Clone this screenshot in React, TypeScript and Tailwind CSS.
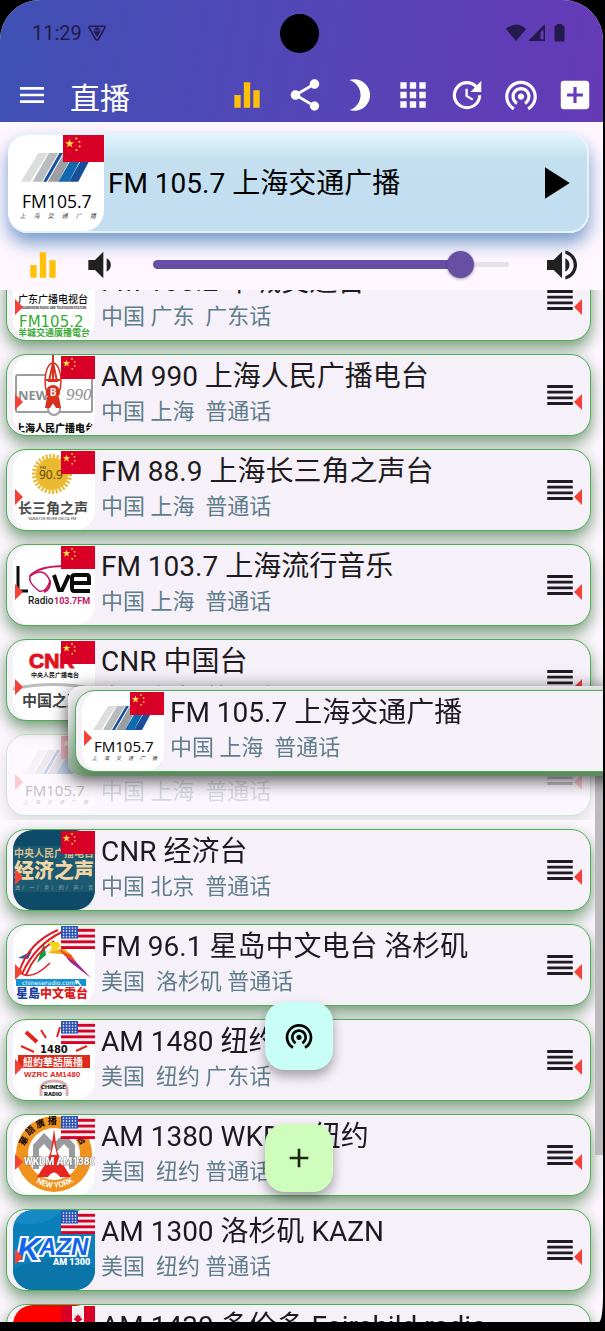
import { ReactNode, useState } from "react";
import {
    MdAdd,
    MdAddBox,
    MdApps,
    MdBrightness3,
    MdEqualizer,
    MdMenu,
    MdPlayArrow,
    MdReorder,
    MdShare,
    MdUpdate,
    MdVolumeDown,
    MdVolumeUp,
    MdWifiTethering,
} from "react-icons/md";

type Country = "cn" | "us" | "ca";

type Station = {
    name: string;
    info: string;
    country: Country;
    logo: ReactNode;
    dragging?: boolean;
};

const CJK = "'Noto Sans CJK SC', sans-serif";
const SANS = "Roboto, 'Noto Sans CJK SC', sans-serif";

const Flag = ({ country, className }: { country: Country; className: string }) => {
    if (country === "us") {
        return (
            <svg viewBox="0 0 34 22" className={className} preserveAspectRatio="none">
                <rect width="34" height="22" fill="#f0f0f0" />
                {[2.75, 8.25, 13.75, 19.25].map((y) => (
                    <rect key={y} y={y} width="34" height="2.75" fill="#d80027" />
                ))}
                <rect width="17" height="12" fill="#2e52b2" />
                {[2, 4.7, 7.4, 10.1].map((y) =>
                    [2.5, 5.5, 8.5, 11.5, 14.5].map((x) => <circle key={x + "-" + y} cx={x} cy={y} r="0.8" fill="#dfe6fb" />)
                )}
            </svg>
        );
    }
    if (country === "ca") {
        return (
            <svg viewBox="0 0 34 23" className={className} preserveAspectRatio="none">
                <rect width="34" height="23" fill="#d80027" />
                <rect x="11" width="12" height="23" fill="#f0f0f0" />
                <path d="M17 8l1 2 1.5-.6-.3 2.6 1.6-.6-.4 1.4.8.6-3 2.4.2.9h-1.1V19h-.6v-2.3h-1.1l.2-.9-3-2.4.8-.6-.4-1.4 1.6.6-.3-2.6 1.5.6z" fill="#d80027" />
            </svg>
        );
    }
    return (
        <svg viewBox="0 0 34 23" className={className} preserveAspectRatio="none">
            <rect width="34" height="23" fill="#d80027" />
            <path d="M5.5 3.4l.95 2.7h2.85L7 7.8l.85 2.8L5.5 9l-2.35 1.6L4 7.8 1.7 6.1h2.85z" fill="#ffda44" />
            <circle cx="11" cy="3" r="0.9" fill="#ffda44" />
            <circle cx="13.6" cy="5.8" r="0.9" fill="#ffda44" />
            <circle cx="13.8" cy="9.8" r="0.9" fill="#ffda44" />
            <circle cx="11.2" cy="12.8" r="0.9" fill="#ffda44" />
        </svg>
    );
};

const LogoFrame = ({ children, bg = "#ffffff" }: { children: ReactNode; bg?: string }) => (
    <svg viewBox="0 0 82 80" className="block h-full w-full rounded-[20px]" preserveAspectRatio="none">
        <rect width="82" height="80" fill={bg} />
        {children}
    </svg>
);

const Logo1057 = () => (
    <LogoFrame>
        <path d="M11 39L26 15h8L19 39z" fill="#dcdddd" />
        <path d="M21 39L35 15h8L29 39z" fill="#b9bcbf" />
        <path d="M30 39L44 15h3L33 39z" fill="#1b4f9c" />
        <path d="M34 39L48 15h8L43 39z" fill="#9b9fa4" />
        <path d="M43 39L57 15h8L52 39z" fill="#1169ae" />
        <path d="M52 39L66 15h7L60 39z" fill="#1a4e9b" />
        <text x="12" y="61" fontSize="15" fontFamily="'Open Sans', sans-serif" fill="#000">FM105.7</text>
        {["上", "海", "交", "通", "广", "播"].map((char, i) => (
            <text key={char} x={10 + i * 12} y="69" fontSize="5" fontStyle="italic" fontFamily={CJK} fill="#333">{char}</text>
        ))}
    </LogoFrame>
);

const Logo1052 = () => (
    <LogoFrame>
        <path d="M22 8q18-9 36 0v8H22z" fill="#4caf50" />
        <text x="5" y="43" fontSize="10" fontWeight="500" fontFamily={CJK} fill="#111">广东广播电视台</text>
        <text x="8" y="49" fontSize="3" fontWeight="700" fontFamily={SANS} fill="#333">GUANGDONG RADIO AND TELEVISION STATION</text>
        <text x="6" y="67" fontSize="15" fontFamily="'DejaVu Sans', sans-serif" fill="#3aaa35">FM105.2</text>
        <text x="5" y="76" fontSize="9" fontWeight="700" fontFamily={CJK} fill="#3aaa35">羊城交通廣播電台</text>
    </LogoFrame>
);

const Logo990 = () => (
    <LogoFrame>
        <rect x="3" y="20" width="76" height="37" rx="2" fill="none" stroke="#9b9d9f" strokeWidth="2" />
        <circle cx="41" cy="54" r="6" fill="#fff" stroke="#9b9d9f" strokeWidth="2" />
        <text x="5" y="45" fontSize="13" fontWeight="700" fontFamily="'Liberation Sans Narrow', 'Noto Sans', sans-serif" fill="#8b8d90">NEWS</text>
        <text x="53" y="45" fontSize="17" fontStyle="italic" fontFamily="'Liberation Serif', serif" fill="#8b8d90">990</text>
        <ellipse cx="40" cy="26" rx="8" ry="18" fill="#fff" stroke="#d9301f" strokeWidth="1.5" />
        <path d="M40 0v26M33 25h14M40 8l-4 18h8z" fill="none" stroke="#d9301f" strokeWidth="2" />
        <circle cx="40" cy="37" r="7" fill="#d9301f" />
        <text x="37" y="41" fontSize="10" fontWeight="700" fontFamily={SANS} fill="#fff">B</text>
        <path d="M34 42h12l2 11h-5l-3-5-3 5h-5z" fill="#d9301f" />
        <text x="2" y="77" fontSize="10" fontWeight="900" fontFamily={CJK} fill="#111">上海人民广播电台</text>
    </LogoFrame>
);

const Logo889 = () => (
    <LogoFrame>
        <circle cx="39" cy="24" r="16" fill="#eab92f" />
        <circle cx="39" cy="24" r="17" fill="none" stroke="#eab92f" strokeWidth="6" strokeDasharray="2 1.5" />
        <text x="27" y="19" fontSize="4" fontFamily={SANS} fill="#333">FM</text>
        <text x="26" y="29" fontSize="12" fontWeight="500" fontFamily="'Open Sans', sans-serif" fill="#5b430d">90.9</text>
        <text x="5" y="63" fontSize="14" fontWeight="700" fontFamily={CJK} fill="#4d4d4d">长三角之声</text>
        <text x="15" y="70" fontSize="4" fontFamily={SANS} fill="#444">YANGTZE RIVER DELTA FM</text>
    </LogoFrame>
);

const LogoLove = () => (
    <LogoFrame>
        <path d="M5 21v25h10" fill="none" stroke="#0c0c0c" strokeWidth="3" />
        <path d="M17 31q14-10 20 5-4 12-11 10Q15 38 17 31z" fill="none" stroke="#c8125f" strokeWidth="1.5" />
        <path d="M17 31Q26 20 58 21M37 35q1 9-6 12" fill="none" stroke="#c8125f" strokeWidth="2" />
        <path d="M41 30l5 15h3l7-15" fill="none" stroke="#0c0c0c" strokeWidth="4" />
        <path d="M77 46H61q-2 0-2-3V33q0-3 3-3h12q2 0 2 3v5H60" fill="none" stroke="#0c0c0c" strokeWidth="4" />
        <text x="15" y="59" fontSize="10" fontWeight="500" fontFamily={SANS} fill="#1a1a1a">Radio</text>
        <text x="41" y="59" fontSize="9" fontWeight="700" fontFamily={SANS} fill="#c8125f">103.7FM</text>
    </LogoFrame>
);

const LogoCnr = () => (
    <LogoFrame>
        <text x="16" y="28" fontSize="21" fontWeight="900" fontFamily="'Liberation Sans', sans-serif" fill="#e2101c" stroke="#e2101c">CNR</text>
        <text x="18" y="37" fontSize="6" fontWeight="700" fontFamily={CJK} fill="#222">中央人民广播电台</text>
        <path d="M0 49Q40 40 82 49" fill="none" stroke="#bdbdbd" strokeWidth="3" />
        <text x="9" y="66" fontSize="15" fontWeight="700" fontFamily={CJK} fill="#444">中国之声</text>
    </LogoFrame>
);

const LogoEconomy = () => (
    <LogoFrame bg="#0d4b68">
        <rect y="16" width="82" height="46" fill="#1c5a72" />
        <text x="1" y="27" fontSize="10" fontWeight="700" fontFamily={CJK} fill="#d8bf92">中央人民广播电台</text>
        <text x="1" y="48" fontSize="20" fontWeight="900" fontFamily={CJK} fill="#f1d5a5">经济之声</text>
        {["进", "/", "一", "/", "步", "/", "的", "/", "声", "/", "音"].map((char, i) => (
            <text key={i} x={2 + i * 7.3} y="59" fontSize="5" fontFamily={CJK} fill="#9fb3b5">{char}</text>
        ))}
    </LogoFrame>
);

const LogoSingTao = () => (
    <LogoFrame>
        <path d="M5 33l14-7-4 8z" fill="#1d61ae" />
        <path d="M24 38l7-20 2 12z" fill="#169b48" />
        <path d="M6 47Q16 17 45 5M9 49Q22 20 49 7M13 50Q22 28 41 16" fill="none" stroke="#df1f26" strokeWidth="2" />
        <path d="M6 47q12 10 31-9" fill="none" stroke="#df1f26" strokeWidth="1.500" />
        <path d="M33 17h12q5 3-1 8l-9 3q8-7-2-11z" fill="#f0d51e" />
        <path d="M35 28l15-5 10 8-11-2z" fill="#f5a81d" />
        <path d="M47 24l17 14 14 15-21-16z" fill="#a0258d" />
        <path d="M46 25l12 5 6 8-12-7z" fill="#ec4c24" />
        <rect x="3" y="54" width="70" height="7" fill="#1691cf" />
        <text x="9" y="60" fontSize="6" fontFamily="'DejaVu Sans', sans-serif" fill="#fff">chineseradio.com</text>
        <path d="M62 55l5 1-1.500 1 3 3-1 1-3-3-1.500 1.500z" fill="#fff" />
        <text x="3" y="73" fontSize="12" fontWeight="900" fontFamily={CJK} fill="#1f3f9c">星島</text>
        <text x="27" y="73" fontSize="12" fontWeight="900" fontFamily={CJK} fill="#e01b22">中文電台</text>
    </LogoFrame>
);

const Logo1480 = () => (
    <LogoFrame>
        <path d="M13 12l11 10" stroke="#e2231a" strokeWidth="4" />
        <path d="M28 10l5 8M44 17l3-10M8 26l13 6M63 31l11-5" stroke="#e2231a" strokeWidth="2" />
        <text x="27" y="33" fontSize="10" fontWeight="700" fontFamily="'DejaVu Sans', sans-serif" fill="#111">1480</text>
        <rect x="5" y="35" width="72" height="13" fill="#dc2a1b" />
        <text x="10" y="46" fontSize="10" fontWeight="700" fontFamily={CJK} fill="#fff">紐約華語廣播</text>
        <text x="11" y="57" fontSize="8" fontWeight="700" fontFamily="'Liberation Sans', sans-serif" fill="#dc2a1b">WZRC AM1480</text>
        <path d="M28 76v-6q0-9 13-9t13 9v6" fill="none" stroke="#d9aeb2" strokeWidth="3" />
        <text x="28" y="69" fontSize="6" fontWeight="900" fontFamily={SANS} fill="#111">CHINESE</text>
        <text x="31" y="76" fontSize="6" fontWeight="900" fontFamily={SANS} fill="#111">RADIO</text>
    </LogoFrame>
);

const Logo1380 = () => (
    <LogoFrame>
        <circle cx="41" cy="39" r="38" fill="#f0931e" />
        <circle cx="41" cy="39" r="26" fill="#fff" />
        <path d="M20 54V30l11-12 10 10 10-10 11 12v24h-6V34l-5-5-10 11-10-11-5 5v20z" fill="#9a9b9d" />
        <path d="M41 14l3 22 5 12 9 14H47q-6-9-12 0H24l9-14 5-12z" fill="#e8251f" />
        <path d="M41 27l-3 13h6z" fill="#fff" />
        <text x="11" y="50" fontSize="10" fontWeight="700" fontFamily="'Liberation Sans Narrow', Roboto, sans-serif" fill="#fff" stroke="#777" strokeWidth="1" paintOrder="stroke">WKDM AM1380</text>
        <text x="6" y="30" fontSize="9" fontWeight="700" fontFamily={CJK} transform="rotate(-60 10 26)">華</text>
        <text x="13" y="19" fontSize="9" fontWeight="700" fontFamily={CJK} transform="rotate(-40 17 16)">語</text>
        <text x="23" y="12" fontSize="9" fontWeight="700" fontFamily={CJK} transform="rotate(-20 27 9)">廣</text>
        <text x="35" y="9" fontSize="9" fontWeight="700" fontFamily={CJK}>播</text>
        <text x="64" y="28" fontSize="8" fontWeight="700" fontFamily={CJK} transform="rotate(60 68 26)">台</text>
        <path id="ring-bottom" d="M18 64Q41 82 66 63" fill="none" />
        <text fontSize="8" fontWeight="700" fontFamily={SANS} fill="#fff"><textPath href="#ring-bottom" startOffset="6">NEW YORK</textPath></text>
    </LogoFrame>
);

const LogoKazn = () => (
    <LogoFrame bg="#0a7fba">
        <path d="M0 60Q40 38 82 58v22H0z" fill="#0b74a9" />
        <path d="M0 12Q30 20 50 0H0z" fill="#1589c5" />
        <g fontFamily="'Liberation Sans', sans-serif" fontWeight="900" fontStyle="italic" fill="#1266ea" stroke="#fff" strokeWidth="4" paintOrder="stroke">
            <text x="4" y="50" fontSize="32">K</text>
            <text x="26" y="45" fontSize="24">AZN</text>
        </g>
        <text x="40" y="55" fontSize="9" fontWeight="900" fontFamily={SANS} fill="#fff">AM 1300</text>
    </LogoFrame>
);

const LogoFairchild = () => (
    <LogoFrame bg="#ff0000">
        <circle cx="41" cy="46" r="20" fill="#fff" />
    </LogoFrame>
);

const stations: Station[] = [
    { name: "FM 105.2 羊城交通台", info: "中国 广东  广东话", country: "cn", logo: <Logo1052 /> },
    { name: "AM 990 上海人民广播电台", info: "中国 上海  普通话", country: "cn", logo: <Logo990 /> },
    { name: "FM 88.9 上海长三角之声台", info: "中国 上海  普通话", country: "cn", logo: <Logo889 /> },
    { name: "FM 103.7 上海流行音乐", info: "中国 上海  普通话", country: "cn", logo: <LogoLove /> },
    { name: "CNR 中国台", info: "中国 北京  普通话", country: "cn", logo: <LogoCnr /> },
    { name: "FM 105.7 上海交通广播", info: "中国 上海  普通话", country: "cn", logo: <Logo1057 />, dragging: true },
    { name: "CNR 经济台", info: "中国 北京  普通话", country: "cn", logo: <LogoEconomy /> },
    { name: "FM 96.1 星岛中文电台 洛杉矶", info: "美国  洛杉矶 普通话", country: "us", logo: <LogoSingTao /> },
    { name: "AM 1480 纽约", info: "美国  纽约 广东话", country: "us", logo: <Logo1480 /> },
    { name: "AM 1380 WKDM 纽约", info: "美国  纽约 普通话", country: "us", logo: <Logo1380 /> },
    { name: "AM 1300 洛杉矶 KAZN", info: "美国  纽约 普通话", country: "us", logo: <LogoKazn /> },
    { name: "AM 1430 多伦多 Fairchild radio", info: "加拿大  多伦多 广东话", country: "ca", logo: <LogoFairchild /> },
];

const StationCard = ({ station }: { station: Station }) => (
    <div className="relative flex h-[82px] items-start rounded-[20px] border border-[#4caf50] bg-[#f6f1f9] pl-1.5 shadow-[0_7px_16px_rgba(27,94,32,0.6)]">
        <div className="relative h-20 w-[82px] shrink-0">
            {station.logo}
            <Flag country={station.country} className="absolute right-0 top-px h-[23px] w-[34px]" />
            <svg viewBox="0 0 8 16" className="absolute left-0.5 top-[39px] h-4 w-2">
                <path d="M0 0l8 8-8 8z" fill="#f44336" />
            </svg>
        </div>
        <div className="ml-1.5 min-w-0 flex-1 overflow-hidden whitespace-pre">
            <h2 className="text-[28px] leading-[43px] text-[#1d1b20]">{station.name}</h2>
            <p className="text-[22px] leading-7 text-[#607d8b]">{station.info}</p>
        </div>
        <button type="button" aria-label={"Reorder " + station.name} className="mr-[13px] flex h-full w-[34px] shrink-0 items-center text-[#1d1b20]">
            <MdReorder size={34} />
        </button>
        <svg viewBox="0 0 8 16" className="absolute right-2 top-[39px] h-4 w-2">
            <path d="M8 0L0 8l8 8z" fill="#f44336" />
        </svg>
    </div>
);

const StatusBar = () => (
    <div className="grid h-[66px] grid-cols-3 items-center pl-8 pr-[37px] text-[#241a4e]">
        <div className="flex items-center gap-1.5">
            <span className="text-[20px]">11:29</span>
            <svg viewBox="0 0 18 16" className="h-4 w-[18px]">
                <path d="M2 1.2h14q1.4.3.8 1.800L10.5 14q-1.5 2-3 0L1.2 3Q.6 1.500 2 1.200z" fill="none" stroke="currentColor" strokeWidth="1.6" />
                <path d="M5.500 5.200q.5-1.500 2-1.700l-.7-1h4.400l-.7 1q1.500.2 2 1.700zM5.300 6.200h7.400L9 12z" fill="currentColor" />
            </svg>
        </div>
        <div className="h-[39px] w-[39px] justify-self-center rounded-full bg-black" />
        <svg viewBox="0 0 60 18" className="h-[18px] w-[60px] justify-self-end" fill="currentColor">
            <path d="M0 5Q10-4 20 5L10 17z" />
            <path fillRule="evenodd" d="M39 0v17H22zM37.500 5.500L34.500 8v7.500h3z" />
            <path d="M51 0h5v1.500h1.500q1 0 1 1V16q0 1.500-1.500 1.500h-7q-1.500 0-1.500-1.500V2.500q0-1 1-1H51z" />
        </svg>
    </div>
);

const ToolbarButton = ({ label, children }: { label: string; children: ReactNode }) => (
    <button type="button" aria-label={label} className="flex h-full w-[54px] shrink-0 items-center justify-center">
        {children}
    </button>
);

const App = () => {
    const [volume, setVolume] = useState<number>(0.895);

    const dragged = stations.find((station) => station.dragging) as Station;

    return (
        <div className="h-screen bg-black pr-0.5 pb-[9px] font-[Roboto,'Noto_Sans_CJK_SC',sans-serif]">
            <div className="flex h-full flex-col overflow-hidden rounded-t-[40px] rounded-br-[4px_25px] bg-[#fef7ff]">
                <header className="shrink-0 bg-linear-[101deg] from-[#3f51b5] to-[#673ab7]">
                    <StatusBar />
                    <nav className="flex h-14 items-center pr-px pt-0.5 text-white">
                        <button type="button" aria-label="Menu" className="ml-4">
                            <MdMenu size={32} />
                        </button>
                        <h1 className="ml-[22px] flex-1 whitespace-nowrap pt-1.5 text-[30px]">直播</h1>
                        <button type="button" aria-label="Playing" className="mr-1 flex h-full w-[54px] shrink-0 items-center justify-center text-[#ffc107]">
                            <MdEqualizer size={38} />
                        </button>
                        <ToolbarButton label="Share"><MdShare size={38} /></ToolbarButton>
                        <ToolbarButton label="Night mode"><MdBrightness3 size={38} /></ToolbarButton>
                        <ToolbarButton label="Grid"><MdApps size={38} /></ToolbarButton>
                        <ToolbarButton label="Timer"><MdUpdate size={38} /></ToolbarButton>
                        <ToolbarButton label="Podcasts"><MdWifiTethering size={38} /></ToolbarButton>
                        <ToolbarButton label="Add"><MdAddBox size={38} /></ToolbarButton>
                    </nav>
                </header>

                <section className="shrink-0 pl-2 pr-3.5 pt-[11px]">
                    <div className="flex h-[100px] items-center rounded-[20px] border-2 border-[#e6f3fa] bg-linear-to-b from-[#e0f4fe] via-[#c4e0ef] via-25% to-[#c3ddf1] shadow-[0_10px_18px_rgba(30,95,165,0.6)]">
                        <div className="relative -ml-0.5 h-24 w-24 shrink-0">
                            <Logo1057 />
                            <Flag country="cn" className="absolute right-0 top-0 h-[27px] w-[41px]" />
                        </div>
                        <p className="ml-1 flex-1 truncate pt-0.5 text-[28px] text-black">{dragged.name}</p>
                        <button type="button" aria-label="Play" className="mr-1.5 shrink-0 text-black">
                            <MdPlayArrow size={54} />
                        </button>
                    </div>
                </section>

                <section className="flex h-[57px] shrink-0 items-center pl-6 pr-[21px] pt-1.5 text-[#212121]">
                    <MdEqualizer size={38} className="shrink-0 text-[#ffc107]" />
                    <MdVolumeDown size={40} className="ml-[18px] shrink-0" />
                    <div className="relative ml-[33px] mr-[33px] flex h-7 flex-1 items-center">
                        <div className="h-[5px] w-full rounded-full bg-[#e6e0e9]" />
                        <div className="absolute left-0 h-[9px] rounded-full bg-[#6750a4]" style={{ width: `${volume * 100}%` }} />
                        <input
                            type="range"
                            aria-label="Volume"
                            min={0}
                            max={1}
                            step={0.005}
                            value={volume}
                            onChange={(event) => setVolume(parseFloat(event.target.value))}
                            className="absolute inset-0 w-full appearance-none bg-transparent [&::-webkit-slider-thumb]:h-[27px] [&::-webkit-slider-thumb]:w-[27px] [&::-webkit-slider-thumb]:appearance-none [&::-webkit-slider-thumb]:rounded-full [&::-webkit-slider-thumb]:bg-[#6750a4] [&::-webkit-slider-thumb]:shadow-[0_1px_3px_rgba(0,0,0,0.4)]"
                        />
                    </div>
                    <MdVolumeUp size={40} className="shrink-0" />
                </section>

                <main className="relative min-h-0 flex-1 overflow-hidden">
                    <ul className="-mt-10">
                        {stations.map((station) => (
                            <li
                                key={station.name}
                                className={station.dragging ? "overflow-hidden pl-1.5 pr-3 pt-[9px] pb-1 opacity-25" : "pl-1.5 pr-3 pt-[9px] pb-1"}
                            >
                                <StationCard station={station} />
                            </li>
                        ))}
                    </ul>

                    <div className="absolute right-0 top-[460px] h-[405px] w-2 bg-[#bcbabd]" />

                    {/* row lifted off the list while it is dragged */}
                    <div className="absolute left-[68px] top-[396px] h-[90px] w-full overflow-hidden rounded-[14px] bg-linear-to-b from-[#f1ecf4] from-40% to-[#90a892] pl-[7px] pt-1 shadow-[0_4px_18px_rgba(0,0,0,0.7)]">
                        <StationCard station={dragged} />
                    </div>

                    <div className="absolute bottom-[130px] left-0 right-1.5 flex flex-col items-center gap-[54px]">
                        <button type="button" aria-label="Broadcast" className="flex h-[68px] w-[68px] items-center justify-center rounded-[20px] bg-[#c8fef5] text-black shadow-[0_6px_12px_rgba(0,0,0,0.35)]">
                            <MdWifiTethering size={32} />
                        </button>
                        <button type="button" aria-label="Add station" className="flex h-[68px] w-[68px] items-center justify-center rounded-[20px] bg-[#cffdbb] text-[#1d2b16] shadow-[0_6px_12px_rgba(0,0,0,0.35)]">
                            <MdAdd size={32} />
                        </button>
                    </div>
                </main>
            </div>
        </div>
    );
};

export default App;
